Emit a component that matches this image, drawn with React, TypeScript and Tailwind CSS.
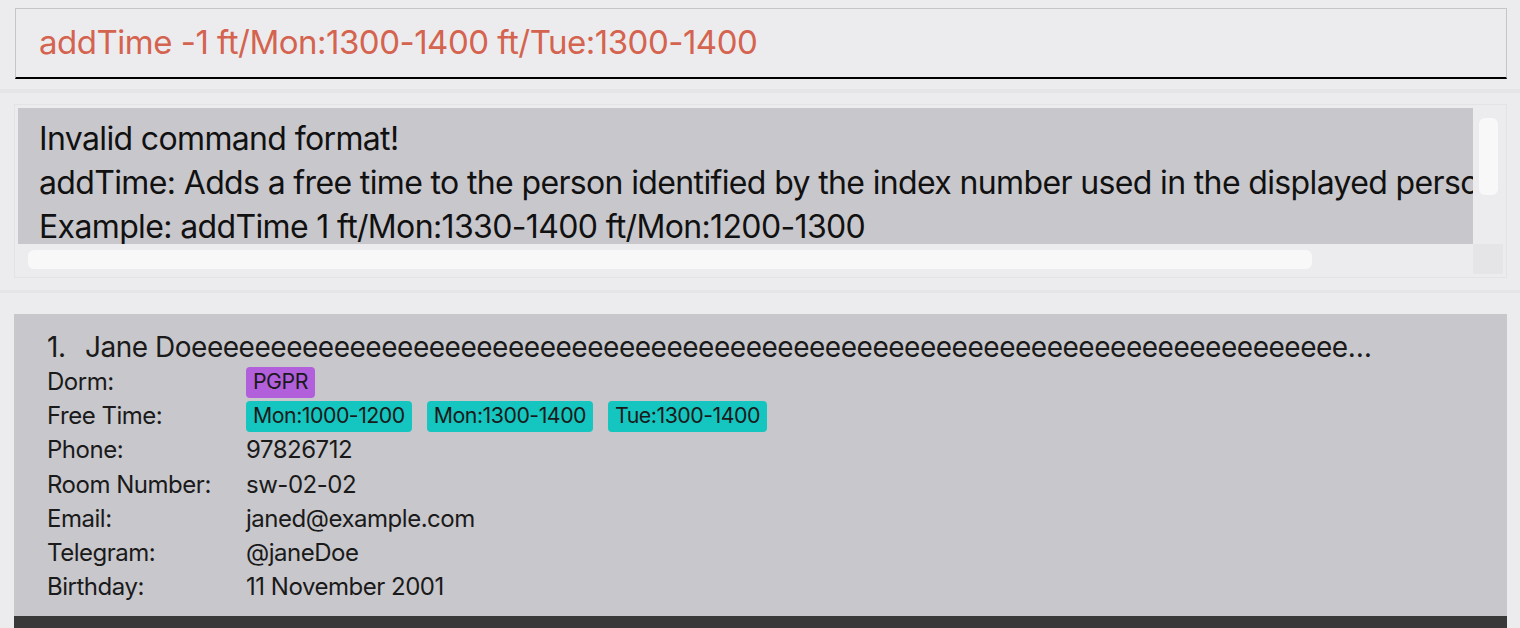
import React from 'react';

interface Person {
  index: number;
  name: string;
  dorm: string;
  freeTimes: string[];
  phone: string;
  room: string;
  email: string;
  telegram: string;
  birthday: string;
}

const person: Person = {
  index: 1,
  name: 'Jane Do' + 'e'.repeat(90),
  dorm: 'PGPR',
  freeTimes: ['Mon:1000-1200', 'Mon:1300-1400', 'Tue:1300-1400'],
  phone: '97826712',
  room: 'sw-02-02',
  email: 'janed@example.com',
  telegram: '@janeDoe',
  birthday: '11 November 2001',
};

const resultLines = [
  'Invalid command format!',
  'addTime: Adds a free time to the person identified by the index number used in the displayed person list.',
  'Example: addTime 1 ft/Mon:1330-1400 ft/Mon:1200-1300',
];

const Row: React.FC<{ label: string; children: React.ReactNode }> = ({ label, children }) => (
  <div className="flex items-center h-[34.2px]">
    <span className="w-[199px] shrink-0">{label}</span>
    <div className="flex items-center gap-[15px]">{children}</div>
  </div>
);

const Chip: React.FC<{ text: string; color: string }> = ({ text, color }) => (
  <span className={`${color} h-[31px] px-[7px] rounded-[4px] flex items-center text-[21.3px] text-[#1a1a1a]`}>
    {text}
  </span>
);

const App: React.FC = () => {
  return (
    <div
      className="w-[1520px] h-[628px] bg-[#ececee] overflow-hidden flex flex-col"
      style={{ fontFamily: 'Inter, "Noto Sans", sans-serif' }}
    >
      {/* command box */}
      <div className="ml-[15px] mr-[13px] mt-[8px] h-[71px] shrink-0 border border-[#c6c6ca] border-b-2 border-b-black flex items-center pl-[23px]">
        <span className="text-[33px] text-[#d4634f] tracking-[-0.015em]">
          addTime -1 ft/Mon:1300-1400 ft/Tue:1300-1400
        </span>
      </div>

      <div className="h-[10px] shrink-0" />
      <div className="h-[4px] shrink-0 bg-[#e5e5e7]" />

      {/* result display */}
      <div className="h-[197px] shrink-0 pt-[11px] pl-[14px] pr-[13px]">
        <div className="h-[174px] border border-[#e3e3e6] p-[3px] flex flex-col">
          <div className="flex h-[136px]">
            <div className="flex-1 bg-[#c8c7cc] overflow-hidden pl-[21px] pt-[9px]">
              {resultLines.map((line) => (
                <div
                  key={line}
                  className="text-[32px] leading-[44px] text-[#111] whitespace-nowrap tracking-[-0.02em]"
                >
                  {line}
                </div>
              ))}
            </div>
            <div className="w-[30px] shrink-0 pt-[10px] pl-[6px]">
              <div className="w-[19px] h-[77px] rounded-[6px] bg-[#f8f8f8]" />
            </div>
          </div>
          <div className="flex h-[30px]">
            <div className="flex-1 pt-[6px] pl-[10px]">
              <div className="w-[1284px] h-[19px] rounded-[6px] bg-[#f8f8f8]" />
            </div>
            <div className="w-[30px] shrink-0 bg-[#e5e5e7]" />
          </div>
        </div>
      </div>

      <div className="h-[3px] shrink-0 bg-[#e5e5e7]" />
      <div className="h-[21px] shrink-0" />

      {/* person card */}
      <div className="ml-[14px] mr-[13px] flex flex-col flex-1">
        <div className="h-[302px] shrink-0 bg-[#c8c7cc] pl-[33px] pt-[15px] text-[#1a1a1a] text-[24px] tracking-[-0.02em]">
          <div className="flex items-center h-[36px] text-[28px]">
            <span className="w-[38px] shrink-0">{person.index}.</span>
            <span className="max-w-[1296px] truncate">{person.name}</span>
          </div>
          <Row label="Dorm:">
            <Chip text={person.dorm} color="bg-[#b25fdc]" />
          </Row>
          <Row label="Free Time:">
            {person.freeTimes.map((t) => (
              <Chip key={t} text={t} color="bg-[#14c6bf]" />
            ))}
          </Row>
          <Row label="Phone:">{person.phone}</Row>
          <Row label="Room Number:">{person.room}</Row>
          <Row label="Email:">{person.email}</Row>
          <Row label="Telegram:">{person.telegram}</Row>
          <Row label="Birthday:">{person.birthday}</Row>
        </div>
        <div className="flex-1 bg-[#393939]" />
      </div>
    </div>
  );
};

export default App;
